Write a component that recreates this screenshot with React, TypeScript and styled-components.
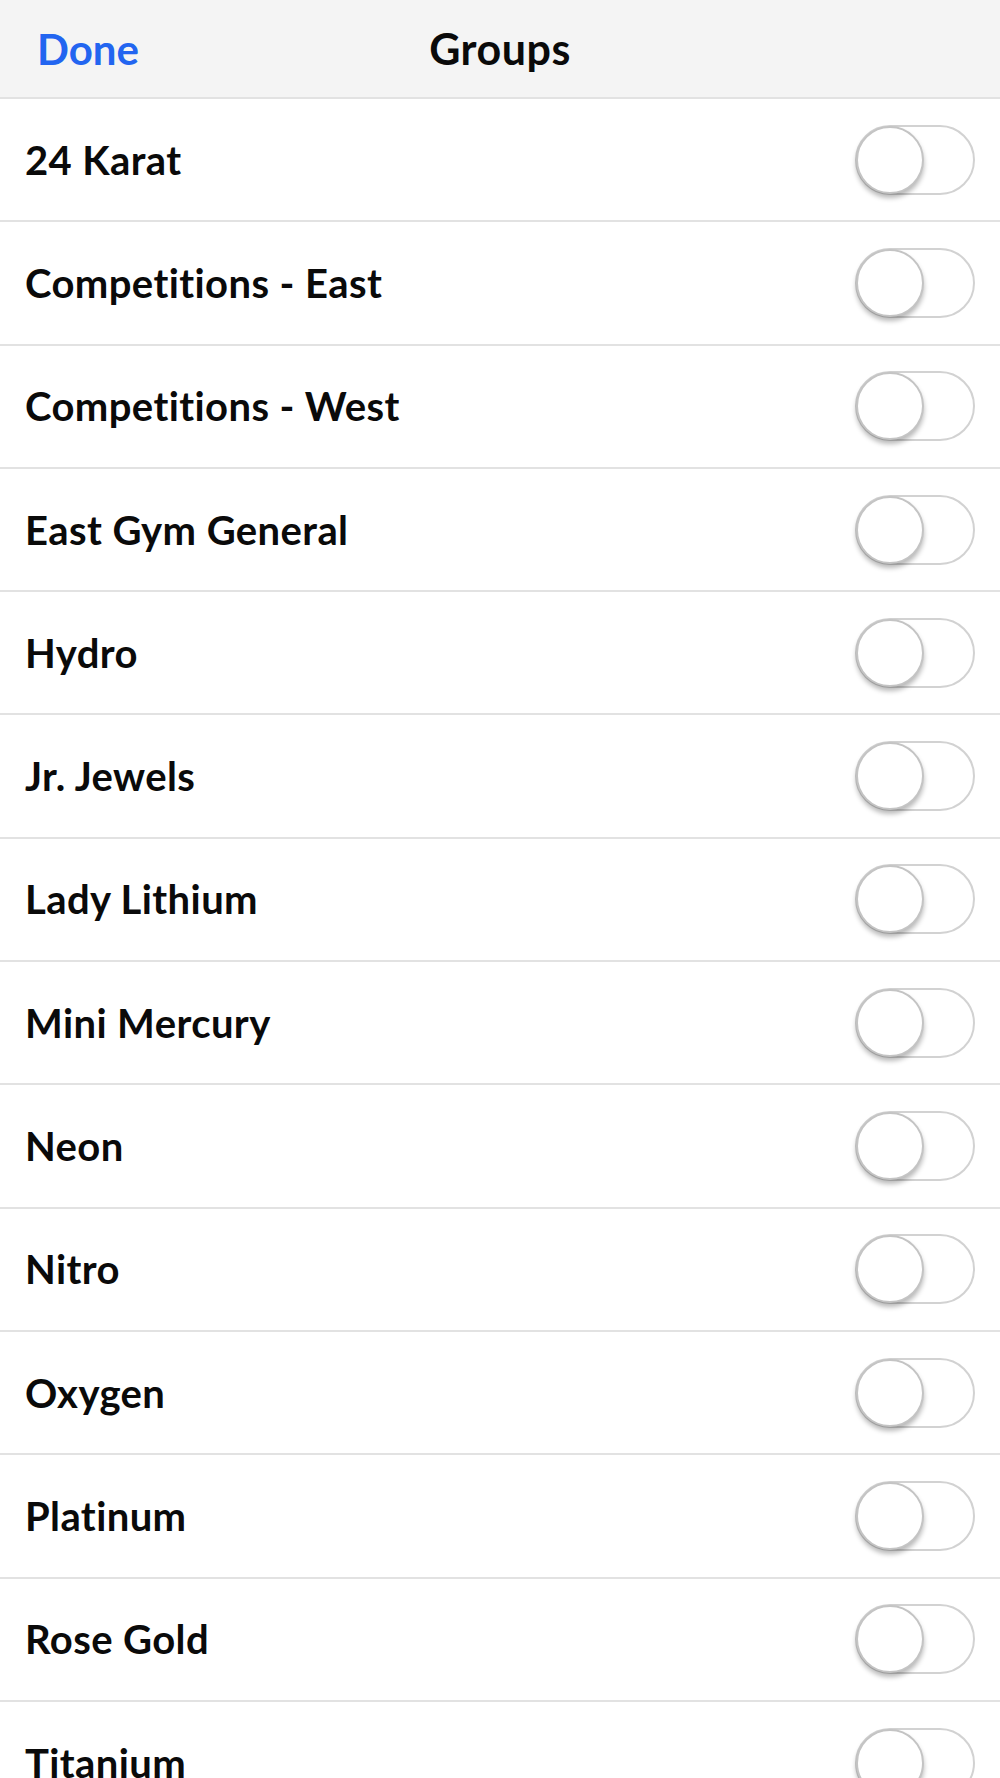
import React from "react";
import styled, { createGlobalStyle } from "styled-components";

const GlobalStyle = createGlobalStyle`
  html, body { margin: 0; padding: 0; background: #ffffff; }
  body {
    font-family: Lato, "Open Sans", sans-serif;
    -webkit-font-smoothing: antialiased;
    font-variant-ligatures: none;
  }
`;

const Screen = styled.div`
  width: 1000px;
  height: 1778px;
  overflow: hidden;
  background: #ffffff;
  display: flex;
  flex-direction: column;
`;

const NavBar = styled.header`
  position: relative;
  flex: 0 0 auto;
  height: 97px;
  background: #f4f4f4;
  border-bottom: 2px solid #e2e2e2;
  display: flex;
  align-items: center;
  justify-content: center;
`;

const DoneButton = styled.button`
  position: absolute;
  left: 37px;
  top: 50%;
  transform: translateY(-50%);
  background: none;
  border: none;
  padding: 0;
  font-family: Lato, "Open Sans", sans-serif;
  font-variant-ligatures: none;
  font-weight: 700;
  font-size: 42px;
  color: #2265f0;
  cursor: pointer;
`;

const Title = styled.h1`
  margin: 0;
  font-family: Lato, "Open Sans", sans-serif;
  font-weight: 700;
  font-size: 43px;
  letter-spacing: 0.5px;
  color: #0a0a0a;
`;

const List = styled.ul`
  list-style: none;
  margin: 0;
  padding: 0;
  display: flex;
  flex-direction: column;
`;

const Row = styled.li`
  flex: 0 0 auto;
  height: 121.3px;
  border-bottom: 2px solid #e2e2e2;
  display: flex;
  align-items: center;
  justify-content: space-between;
  padding: 0 25px;
`;

const Label = styled.span`
  font-family: Lato, "Open Sans", sans-serif;
  font-variant-ligatures: none;
  font-weight: 700;
  font-size: 40px;
  letter-spacing: 0.4px;
  color: #0a0a0a;
`;

const Track = styled.button<{ $on: boolean }>`
  position: relative;
  width: 120px;
  height: 70px;
  padding: 0;
  border-radius: 35px;
  border: 2px solid ${(p) => (p.$on ? "#4cd964" : "#d2d2d2")};
  background: ${(p) => (p.$on ? "#4cd964" : "#ffffff")};
  box-sizing: border-box;
  cursor: pointer;
`;

const Knob = styled.span<{ $on: boolean }>`
  position: absolute;
  top: -1px;
  left: ${(p) => (p.$on ? "49px" : "-1px")};
  width: 68px;
  height: 68px;
  border-radius: 50%;
  background: #ffffff;
  border: 2px solid #c4c4c4;
  box-shadow: 0 4px 5px rgba(0, 0, 0, 0.28);
  box-sizing: border-box;
`;

const groups = [
  "24 Karat",
  "Competitions - East",
  "Competitions - West",
  "East Gym General",
  "Hydro",
  "Jr. Jewels",
  "Lady Lithium",
  "Mini Mercury",
  "Neon",
  "Nitro",
  "Oxygen",
  "Platinum",
  "Rose Gold",
  "Titanium",
];

function Toggle() {
  const [on, setOn] = React.useState(false);
  return (
    <Track $on={on} onClick={() => setOn(!on)} aria-pressed={on}>
      <Knob $on={on} />
    </Track>
  );
}

export default function App() {
  return (
    <>
      <GlobalStyle />
      <Screen>
        <NavBar>
          <DoneButton>Done</DoneButton>
          <Title>Groups</Title>
        </NavBar>
        <List>
          {groups.map((g) => (
            <Row key={g}>
              <Label>{g}</Label>
              <Toggle />
            </Row>
          ))}
        </List>
      </Screen>
    </>
  );
}
